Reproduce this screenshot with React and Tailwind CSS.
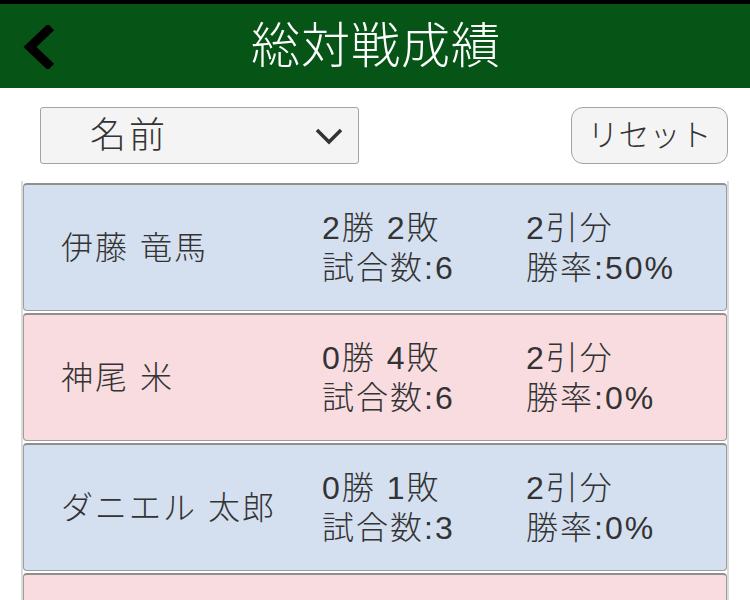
import React from "react";

const rows = [
  { name: "伊藤 竜馬", w: 2, l: 2, d: 2, n: 6, r: "50%", blue: true },
  { name: "神尾 米", w: 0, l: 4, d: 2, n: 6, r: "0%", blue: false },
  { name: "ダニエル 太郎", w: 0, l: 1, d: 2, n: 3, r: "0%", blue: true },
  { name: "", w: null, l: null, d: null, n: null, r: "", blue: false },
];

export default function App() {
  return (
    <div
      className="w-[750px] h-[600px] overflow-hidden bg-white text-[#333] font-light"
      style={{ fontFamily: '"Liberation Sans", "Noto Sans CJK JP", sans-serif' }}
    >
      <div className="h-[4px] bg-black" />
      <div className="relative h-[84px] bg-[#065517] flex items-center justify-center">
        <svg
          className="absolute left-[22px] top-[21px]"
          width="34"
          height="44"
          viewBox="0 0 34 44"
        >
          <path d="M29 2 L8 22 L29 42" fill="none" stroke="#000" strokeWidth="9" strokeLinejoin="miter" />
        </svg>
        <div className="text-white text-[49px] leading-none tracking-[1px] pl-[2px]">総対戦成績</div>
      </div>

      <div className="flex items-center justify-between pl-[40px] pr-[22px] pt-[19px]">
        <div className="w-[319px] h-[57px] bg-[#f4f4f4] border border-[#a3a3a3] rounded-[3px] flex items-center justify-between pl-[49px] pr-[14px]">
          <span className="text-[36px] leading-none tracking-[3px]">名前</span>
          <svg width="30" height="20" viewBox="0 0 30 20">
            <path d="M3 4 L15 16 L27 4" fill="none" stroke="#333" strokeWidth="3.5" />
          </svg>
        </div>
        <div className="w-[157px] h-[57px] bg-[#f4f4f4] border border-[#a3a3a3] rounded-[12px] flex items-center justify-center">
          <span className="text-[31px] leading-none">リセット</span>
        </div>
      </div>

      <div className="mt-[17px] mx-[21px] border-x-2 border-[#dcdcdc] pt-[2px] flex flex-col gap-[2px]">
        {rows.map((r, i) => (
          <div
            key={i}
            className={`h-[128px] shrink-0 rounded-[4px] border border-[#9c9c9c] border-t-2 border-t-[#8f8f8f] flex items-center ${
              r.blue ? "bg-[#d4e0f0]" : "bg-[#f8dce0]"
            }`}
          >
            {r.name && (
              <>
                <div className="w-[298px] pl-[37px] text-[32px] leading-none tracking-[2px]">{r.name}</div>
                <div className="w-[204px] text-[32px] leading-[40px] tracking-[2px]">
                  <div>{r.w}勝 {r.l}敗</div>
                  <div>試合数:{r.n}</div>
                </div>
                <div className="text-[32px] leading-[40px] tracking-[2px]">
                  <div>{r.d}引分</div>
                  <div>勝率:{r.r}</div>
                </div>
              </>
            )}
          </div>
        ))}
      </div>
    </div>
  );
}
